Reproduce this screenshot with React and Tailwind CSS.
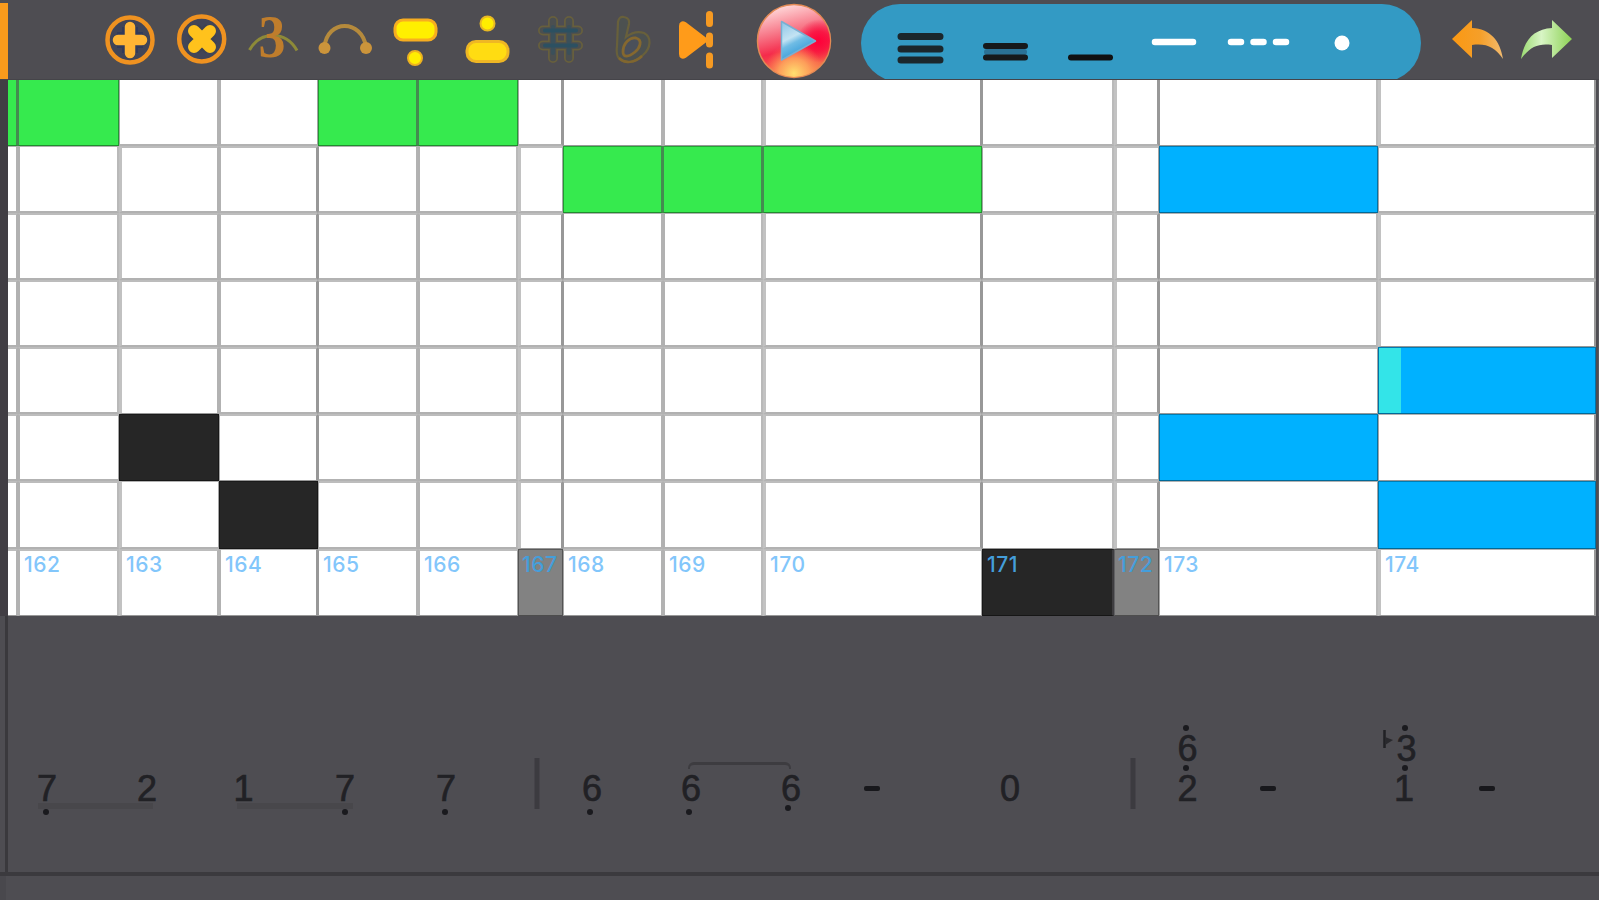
import clsx from 'clsx';

// one entry per step of the piano roll, fills are keyed by row
const columns = [
  { w: 10, line: 'mid', fills: { 0: 'green' } },
  { id: 162, w: 101, line: 'wide', fills: { 0: 'green' } },
  { id: 163, w: 100, line: 'mid', fills: { 5: 'black' } },
  { id: 164, w: 99, line: 'thin', fills: { 6: 'black' } },
  { id: 165, w: 100, line: 'mid', fills: { 0: 'green' } },
  { id: 166, w: 100, line: 'wide', fills: { 0: 'green' } },
  { id: 167, w: 45, line: 'thin', fills: { 7: 'gray' } },
  { id: 168, w: 100, line: 'mid', fills: { 1: 'green' } },
  { id: 169, w: 100, line: 'wide', fills: { 1: 'green' } },
  { id: 170, w: 219, line: 'thin', fills: { 1: 'green' } },
  { id: 171, w: 132, line: 'wide', fills: { 7: 'black' } },
  { id: 172, w: 45, line: 'thin', fills: { 7: 'gray' } },
  { id: 173, w: 219, line: 'wide', fills: { 1: 'blue', 5: 'blue' } },
  { id: 174, w: 218, line: 'thin', fills: { 4: 'blue', 6: 'blue' } },
];

const rows = [66, 67, 67, 67, 67, 67, 68, 67];

const fillClass = {
  green: 'bg-[#36ea4e]',
  black: 'bg-[#262626]',
  gray: 'bg-[#828282]',
  blue: 'bg-[#00b1ff]',
};

const rightLine = {
  thin: 'border-r-2 border-r-black/40',
  mid: 'border-r-2 border-r-black/30',
  wide: 'border-r-2 border-r-black/27',
};

const leftLine = {
  thin: 'border-l border-l-black/40',
  mid: 'border-l-2 border-l-black/30',
  wide: 'border-l-3 border-l-black/24',
};

function Cell({ col, row }) {
  const fillAt = (c, r) => columns[c]?.fills[r];
  const fill = fillAt(col, row);
  const left = fillAt(col - 1, row);
  const right = fillAt(col + 1, row);
  const { id, line } = columns[col];
  const prev = columns[col - 1]?.line;
  const above = fillAt(col, row - 1);

  // thin edges round a filled cell, softer and wider lines between empty ones
  const leftEdge = fill && left ? 'border-l border-l-[#4e4d52]/60' : !fill && !left ? leftLine[prev] : 'border-l border-l-black/35';
  const rightEdge = fill && right ? 'border-r-2 border-r-[#4e4d52]/60' : !fill && !right ? rightLine[line] : 'border-r border-r-black/35';

  return (
    <div
      className={clsx(
        'relative overflow-hidden',
        fill ? fillClass[fill] : 'bg-white',
        col > 0 && leftEdge,
        rightEdge,
        row > 0 && (fill || above ? 'border-t border-t-black/30' : 'border-t-2 border-t-black/26'),
        fill || fillAt(col, row + 1) || row === 7 ? 'border-b border-b-black/40' : 'border-b-2 border-b-black/30'
      )}
      style={{ height: rows[row] }}
    >
      {id === 174 && row === 4 && <div className="h-full w-[22px] bg-[#33e4e8]" />}
      {row === 7 && id && (
        <span
          className={clsx(
            'absolute text-[21px] leading-[24px] font-medium tracking-[0.5px]',
            fill || above ? 'top-[3px]' : 'top-[2px]',
            fill === 'gray' ? 'left-[3px]' : 'left-[4px]',
            fill ? 'text-[#449edb]' : 'text-[#82c6fb]'
          )}
        >
          {id}
        </span>
      )}
    </div>
  );
}

function Tool({ children }) {
  return (
    <svg width="71.5" height="80" viewBox="0 0 71.5 80" fill="none" className="shrink-0">
      {children}
    </svg>
  );
}

function Toolbar() {
  return (
    <header className="flex h-20 w-full overflow-hidden border-b border-[#454449]">
      <div className="mt-[3px] w-2 shrink-0 bg-[#f99b1c]" />
      <div className="ml-[86px] flex">
        <Tool>
          <circle cx="36" cy="40" r="22.5" fill="#414557" stroke="#ef9220" strokeWidth="4.5" />
          <path d="M36 27v26M23 40h26" stroke="#313b5b" strokeWidth="16" />
          <path d="M36 27v26M24 40h24" stroke="#ffb534" strokeWidth="10.5" strokeLinecap="round" />
        </Tool>
        <Tool>
          <circle cx="35.7" cy="39" r="22.5" fill="#414557" stroke="#ef9220" strokeWidth="4.5" />
          <path d="M27 30l18 18M45 30l-18 18" stroke="#3d4252" strokeWidth="16" />
          <path d="M28 31l16 16M44 31l-16 16" stroke="#ffc21c" strokeWidth="12" strokeLinecap="round" />
        </Tool>
        <Tool>
          <path d="M12.500 50C18 40 26 35.500 36 35.500s18 4.500 24 15" stroke="#8d8a38" strokeWidth="3" />
          <text x="35" y="57" textAnchor="middle" fontSize="61" fontWeight="bold" fill="#bf7d2c" fontFamily="Liberation Serif, serif" textLength="27" lengthAdjust="spacingAndGlyphs">3</text>
        </Tool>
        <Tool>
          <path d="M15.500 47C18 19 53 19 57 47" stroke="#b58a3c" strokeWidth="4" />
          <circle cx="15.5" cy="48" r="6" fill="#cb943b" />
          <circle cx="57" cy="48" r="6" fill="#cb943b" />
        </Tool>
        <Tool>
          <rect x="15" y="20" width="41" height="20" rx="8" fill="#ffef00" stroke="#f7ad20" strokeWidth="3" />
          <circle cx="35" cy="58" r="7" fill="#ffee00" stroke="#edb220" strokeWidth="2" />
        </Tool>
        <Tool>
          <circle cx="35.5" cy="23.5" r="7" fill="#ffee00" stroke="#e8b923" strokeWidth="2" />
          <rect x="15" y="41.5" width="41" height="20" rx="9" fill="#ffdc12" stroke="#efb724" strokeWidth="3" />
        </Tool>
        <Tool>
          <path d="M30 21v37M46 21v37M20 30.500h35M20 45.500h35" stroke="#675f3d" strokeWidth="10" strokeLinecap="round" />
          <path d="M30 21v37M46 21v37M20 30.500h35M20 45.500h35" stroke="#4b4f50" strokeWidth="6.500" strokeLinecap="round" />
          <path d="M30 27v26M46 27v26" stroke="#3b505a" strokeWidth="4" strokeLinecap="round" />
          <path d="M22 30.500h31M22 45.500h31" stroke="#2c5061" strokeWidth="4" strokeLinecap="round" />
        </Tool>
        <Tool>
          <path d="M23 22q1-6 6-5 6 1 5 7l-3 13q9-7 18-4c8 4 7 15-1 22-9 9-20 9-25 2q-2-4-1-11z" fill="#4c5150" stroke="#68603b" strokeWidth="2.2" />
          <path d="M28 52c0-9 7-15 13-14 7 2 4 10-1 14-6 5-12 6-12 0z" fill="#4b505a" stroke="#85682f" strokeWidth="2.800" />
          <path d="M24 58c6 6 16 5 23-2" stroke="#80662f" strokeWidth="2.5" />
        </Tool>
        <Tool>
          <path d="M15 26q0-4 4-2l21 16-21 16q-4 2-4-2z" fill="#ff9b1a" stroke="#ff9b1a" strokeWidth="4" strokeLinejoin="round" />
          <path d="M43.5 14.500v9M43.5 36v8M43.5 56v9" stroke="#f69a22" strokeWidth="7" strokeLinecap="round" />
        </Tool>
      </div>
      <svg width="80" height="80" viewBox="0 0 80 80" className="ml-[15px] shrink-0">
        <defs>
          <linearGradient id="ball" x1=".35" y1="0" x2=".6" y2="1">
            <stop offset="0" stopColor="#ffdcdc" />
            <stop offset=".35" stopColor="#f77687" />
            <stop offset=".6" stopColor="#f52b4b" />
            <stop offset="1" stopColor="#f78a4b" />
          </linearGradient>
          <radialGradient id="ruby" cx=".84" cy=".5" r=".3">
            <stop offset="0" stopColor="#ff0039" />
            <stop offset=".45" stopColor="#fa0a3c" stopOpacity=".8" />
            <stop offset="1" stopColor="#f5083c" stopOpacity="0" />
          </radialGradient>
          <radialGradient id="glow" cx=".5" cy=".95" r=".42">
            <stop offset="0" stopColor="#ffe070" />
            <stop offset=".5" stopColor="#ffae5e" stopOpacity=".8" />
            <stop offset="1" stopColor="#ff8050" stopOpacity="0" />
          </radialGradient>
          <linearGradient id="play" x1="0" y1="0" x2=".45" y2="1">
            <stop offset="0" stopColor="#8cc4e6" />
            <stop offset=".45" stopColor="#c3e3f3" />
            <stop offset=".6" stopColor="#6fbce5" />
            <stop offset="1" stopColor="#2c95d6" />
          </linearGradient>
        </defs>
        <circle cx="41" cy="41" r="36.5" fill="url(#ball)" stroke="#e38a55" strokeWidth="1.5" />
        <circle cx="41" cy="41" r="36" fill="url(#ruby)" />
        <circle cx="41" cy="41" r="36" fill="url(#glow)" />
        <path d="M28.500 21.500v38.500l34-19z" fill="url(#play)" stroke="#78afd2" strokeWidth="1.5" strokeLinejoin="round" />
      </svg>
      <div className="mt-1 ml-[28.5px] h-[78px] w-[560px] shrink-0 rounded-full bg-[#339ac4]">
        <svg width="560" height="76" viewBox="0 0 560 76" strokeLinecap="round">
          <path d="M40 32.500h39M40 45h39M40 56h39" stroke="#1b272c" strokeWidth="7" />
          <path d="M126 48h37" stroke="#2a7195" strokeWidth="6" />
          <path d="M125 42h39M125 53.500h39" stroke="#16191b" strokeWidth="6" />
          <path d="M210 53.500h39" stroke="#101112" strokeWidth="6" />
          <path d="M294 38h38M370 38h10M392.500 38h10M415 38h10" stroke="#fff" strokeWidth="6.500" />
          <circle cx="481" cy="39" r="7.500" fill="#fff" />
        </svg>
      </div>
      <svg width="150" height="80" viewBox="0 0 150 80" className="ml-[25px] shrink-0">
        <defs>
          <linearGradient id="undo"><stop offset="0" stopColor="#fa9812" /><stop offset=".55" stopColor="#f59f29" /><stop offset="1" stopColor="#f2bb70" /></linearGradient>
          <linearGradient id="redo"><stop offset="0" stopColor="#9bdb72" /><stop offset=".4" stopColor="#d8f5c5" /><stop offset="1" stopColor="#8cd154" /></linearGradient>
        </defs>
        <path d="M6 39L26 20v8c18 1 28 12 31 31-8-12-17-16-31-14v13z" fill="url(#undo)" />
        <path d="M126 39L106 20v8c-18 1-28 12-31 31 9-12 17-16 31-14v13z" fill="url(#redo)" />
      </svg>
    </header>
  );
}

const notes = [
  { x: 47, n: '7' }, { x: 147, n: '2' }, { x: 243.5, n: '1' }, { x: 345, n: '7' }, { x: 446, n: '7' },
  { x: 592, n: '6' }, { x: 691, n: '6' }, { x: 791, n: '6' }, { x: 1010, n: '0' },
  { x: 1187.5, n: '2' }, { x: 1187.5, y: 131, n: '6' },
  { x: 1404, n: '1' }, { x: 1406.5, y: 131, n: '3' },
];

const dots = [
  [46, 811.5], [345, 811.5], [444.5, 811.5], [590, 811.5], [689, 811.5], [788, 808],
  [1186, 728], [1186, 768], [1405, 728], [1405, 768],
];

// the score is a free canvas, everything on it is placed by its centre
function Score() {
  return (
    <section className="relative h-full w-full overflow-hidden text-[#212125]">
      {notes.map((note, i) => (
        <span
          key={i}
          className="absolute w-6 -translate-x-1/2 text-center font-['Liberation_Sans',Arial,sans-serif] text-[36px] leading-none [-webkit-text-stroke:0.7px_#212125]"
          style={{ left: note.x, top: (note.y ?? 171) - 16 }}
        >
          {note.n}
        </span>
      ))}
      {dots.map(([x, y], i) => (
        <i key={i} className="absolute size-[6px] -translate-1/2 rounded-full bg-[#1a1a1e]" style={{ left: x, top: y - 616 }} />
      ))}
      {[872, 1268, 1487].map((x) => (
        <i key={x} className="absolute top-[169.5px] h-[5px] w-4 -translate-x-1/2 rounded-xs bg-[#18181c]" style={{ left: x }} />
      ))}
      {[537, 1132.5].map((x) => (
        <i key={x} className="absolute top-[142px] h-[51px] w-[5px] -translate-x-1/2 bg-[#3c3b40]" style={{ left: x }} />
      ))}
      <i className="absolute top-[187px] left-[38px] h-[6px] w-[115px] bg-[#48474b]" />
      <i className="absolute top-[187px] left-[237px] h-[6px] w-[116px] bg-[#48474b]" />
      <i className="absolute top-[146px] left-[688px] h-[7px] w-[103px] rounded-t-md border-x-2 border-t-3 border-[#3d3c40]" />
      <svg width="14" height="20" viewBox="0 0 14 20" className="absolute top-[113px] left-[1381px]">
        <path d="M3.500 1v18" stroke="#212125" strokeWidth="2.500" />
        <path d="M4 8l8 3-8 5z" fill="#29292d" />
      </svg>
    </section>
  );
}

export default function App() {
  return (
    <div className="flex h-[900px] w-[1599px] flex-col overflow-hidden bg-[#4e4d52] font-['Inter',sans-serif]">
      <Toolbar />
      <main className="flex h-[536px] border-r border-l-8 border-l-[#413e44] border-r-[#5a595e]">
        {columns.map((c, col) => (
          <div key={col} className="shrink-0" style={{ width: c.w }}>
            {rows.map((_, row) => <Cell key={row} col={col} row={row} />)}
          </div>
        ))}
      </main>
      <div className="relative h-[260px] border-b-4 border-[#3b3a3e]">
        <div className="absolute inset-y-0 left-[5px] w-[3px] bg-[#3a393d]" />
        <Score />
      </div>
      <footer className="flex-1 border-l-[6px] border-[#49484d]" />
    </div>
  );
}
